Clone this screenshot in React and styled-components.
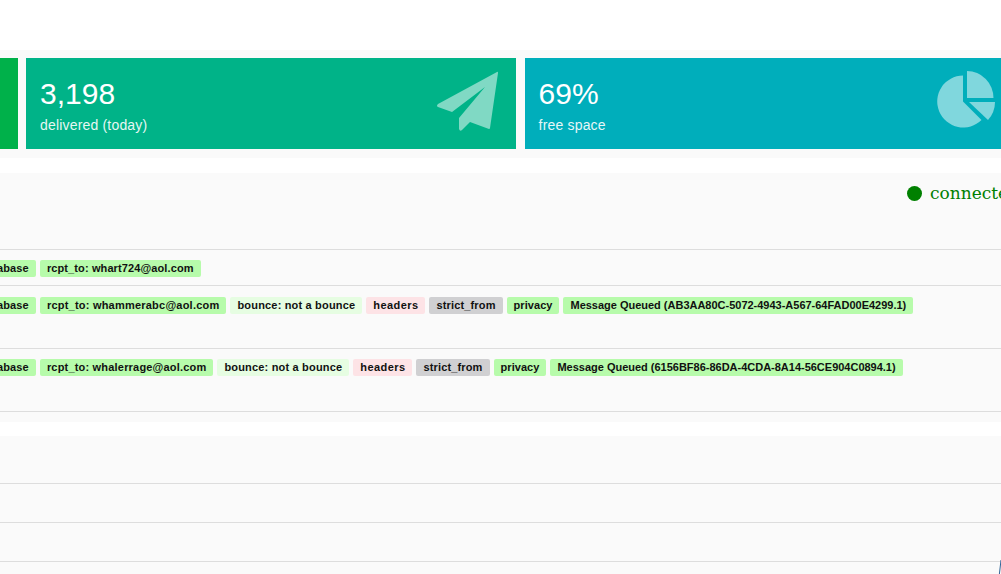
import React from 'react';
import styled, { createGlobalStyle } from 'styled-components';

const GlobalStyle = createGlobalStyle`
  html, body {
    margin: 0;
    padding: 0;
    height: 100%;
    overflow: hidden;
    background: #fff;
    font-family: "Liberation Sans", Arial, sans-serif;
  }
`;

const Page = styled.div`
  position: relative;
  width: 1001px;
  height: 574px;
  overflow: hidden;
  padding-top: 50px;
  box-sizing: border-box;
`;

const StatsBand = styled.div`
  display: flex;
  gap: 8.6px;
  height: 91px;
  padding: 8px 0 9px;
  margin-left: -472.2px;
  width: 1600px;
  background: #fafafa;
`;

const StatCard = styled.div`
  width: 490px;
  flex: none;
  box-sizing: border-box;
  padding: 19px 14px 0 13.6px;
  display: flex;
  justify-content: space-between;
  color: #fff;
  background: ${(props) => props.$color};
`;

const StatText = styled.div`
  display: flex;
  flex-direction: column;
`;

const StatValue = styled.div`
  font-size: 30px;
  line-height: 34px;
`;

const StatLabel = styled.div`
  font-size: 14px;
  line-height: 16px;
  letter-spacing: 0.18px;
  margin-top: 6px;
  opacity: 0.9;
`;

const StatIcon = styled.svg`
  width: 62px;
  height: 62px;
  margin: -6px 4px 0 0;
  fill: rgba(255, 255, 255, 0.5);
`;

const LogPanel = styled.section`
  margin-top: 15px;
  height: 249px;
  background: #fafafa;
  display: flex;
  flex-direction: column;
`;

const StatusBar = styled.div`
  height: 77px;
  flex: none;
  display: flex;
  padding: 2px 0 0 907px;
  box-sizing: border-box;
  white-space: nowrap;
  border-bottom: 1px solid #ddd;
`;

const StatusDot = styled.span`
  width: 15px;
  height: 15px;
  border-radius: 50%;
  background: green;
  margin-top: 11px;
  flex: none;
`;

const StatusText = styled.span`
  font-family: "DejaVu Serif", "Liberation Serif", serif;
  font-size: 17px;
  line-height: 37px;
  color: green;
  margin-left: 8px;
`;

const LogRow = styled.div`
  height: ${(props) => props.$height}px;
  box-sizing: border-box;
  flex: none;
  padding-top: ${(props) => props.$top || 10}px;
  margin-left: -27px;
  display: flex;
  gap: 4px;
  align-items: flex-start;
  white-space: nowrap;
  border-bottom: 1px solid #ddd;
`;

const Tag = styled.span`
  font-size: 11px;
  font-weight: 700;
  line-height: 13px;
  letter-spacing: ${(props) => props.$spacing ?? 0.15}px;
  padding: 2px 7px;
  border-radius: 2px;
  color: #111;
  background: ${(props) => props.$bg || '#b7fbab'};
`;

const EmptyPanel = styled.section`
  margin-top: 14px;
  background: #fafafa;
  height: 150px;
`;

const EmptyRow = styled.div`
  height: ${(props) => props.$height}px;
  box-sizing: border-box;
  border-bottom: 1px solid #ddd;
`;

const CornerMark = styled.svg`
  position: absolute;
  right: 0;
  bottom: 0;
  width: 3px;
  height: 14px;
`;

const PaperPlane = () => (
  <StatIcon viewBox="0 0 62 62">
    <path d="M61 1 L2 33 Q0 35 2 36 L16 41 L49 16 L23 47 L23 58 Q24 61 26 59 L34 51 L53 58 Q54 58 54 57 L62 2 Q62 0 61 1 Z" />
  </StatIcon>
);

const PieIcon = () => (
  <StatIcon viewBox="0 0 62 62">
    <path d="M28 4.5 A26 26 0 1 0 46.5 49 L28 30.5 Z" />
    <path d="M32 0 A26.5 27 0 0 1 58.5 27 L32 27 Z" />
    <path d="M34 31 L60 31 A27 27 0 0 1 53 49 Z" />
  </StatIcon>
);

// tags shared by the two delivered rows
const DeliveryTags = ({ rcpt, rcptSpacing, queued }) => (
  <>
    <Tag>database</Tag>
    <Tag $spacing={rcptSpacing}>rcpt_to: {rcpt}</Tag>
    <Tag $bg="#e6fde2" $spacing={0.18}>bounce: not a bounce</Tag>
    <Tag $bg="#fde3e6" $spacing={0.42}>headers</Tag>
    <Tag $bg="#d0d0d2" $spacing={0.15}>strict_from</Tag>
    <Tag $spacing={0.05}>privacy</Tag>
    <Tag $spacing={-0.01}>Message Queued ({queued})</Tag>
  </>
);

const App = () => {
  return (
    <Page>
      <GlobalStyle />
      <StatsBand>
        <StatCard $color="#00b14a" />
        <StatCard $color="#00b388">
          <StatText>
            <StatValue>3,198</StatValue>
            <StatLabel>delivered (today)</StatLabel>
          </StatText>
          <PaperPlane />
        </StatCard>
        <StatCard $color="#00aebb">
          <StatText>
            <StatValue>69%</StatValue>
            <StatLabel>free space</StatLabel>
          </StatText>
          <PieIcon />
        </StatCard>
      </StatsBand>

      <LogPanel>
        <StatusBar>
          <StatusDot />
          <StatusText>connected</StatusText>
        </StatusBar>
        <LogRow $height={36}>
          <Tag>database</Tag>
          <Tag $spacing={0.11}>rcpt_to: whart724@aol.com</Tag>
        </LogRow>
        <LogRow $height={63} $top={11}>
          <DeliveryTags
            rcpt="whammerabc@aol.com"
            rcptSpacing={0.22}
            queued="AB3AA80C-5072-4943-A567-64FAD00E4299.1"
          />
        </LogRow>
        <LogRow $height={63}>
          <DeliveryTags
            rcpt="whalerrage@aol.com"
            rcptSpacing={0.19}
            queued="6156BF86-86DA-4CDA-8A14-56CE904C0894.1"
          />
        </LogRow>
      </LogPanel>

      <EmptyPanel>
        <EmptyRow $height={48} />
        <EmptyRow $height={39} />
        <EmptyRow $height={39} />
      </EmptyPanel>

      <CornerMark viewBox="0 0 3 14">
        <path d="M3 0 L1.4 14" stroke="#2f6497" strokeWidth="1" fill="none" />
      </CornerMark>
    </Page>
  );
};

export default App;
